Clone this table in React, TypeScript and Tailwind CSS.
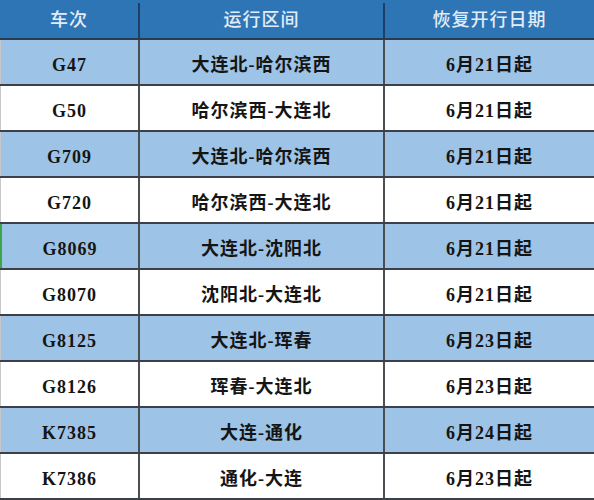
const rows = [
    { no: 'G47', route: '大连北-哈尔滨西', date: '6月21日起' },
    { no: 'G50', route: '哈尔滨西-大连北', date: '6月21日起' },
    { no: 'G709', route: '大连北-哈尔滨西', date: '6月21日起' },
    { no: 'G720', route: '哈尔滨西-大连北', date: '6月21日起' },
    { no: 'G8069', route: '大连北-沈阳北', date: '6月21日起' },
    { no: 'G8070', route: '沈阳北-大连北', date: '6月21日起' },
    { no: 'G8125', route: '大连北-珲春', date: '6月23日起' },
    { no: 'G8126', route: '珲春-大连北', date: '6月23日起' },
    { no: 'K7385', route: '大连-通化', date: '6月24日起' },
    { no: 'K7386', route: '通化-大连', date: '6月23日起' },
];

export default function App() {
    return (
        <div
            className="w-[594px] h-[500px] overflow-hidden bg-white"
            style={{ fontFamily: '"Liberation Serif", "Noto Sans CJK SC", serif' }}
        >
            {/* Header */}
            <div className="flex h-[40px] pt-[3px] bg-[#2e75b6] border-b-2 border-[#2a3b50] text-[18px] tracking-[1px] text-[#e3ecf6] font-medium">
                <div className="w-[140px] flex items-center justify-center border-r-2 border-[#1f3f66]">车次</div>
                <div className="w-[245px] flex items-center justify-center border-r-2 border-[#1f3f66]">运行区间</div>
                <div className="flex-1 flex items-center justify-center">恢复开行日期</div>
            </div>

            {/* Rows */}
            {rows.map((row, i) => (
                <div
                    key={row.no}
                    className={`flex h-[46px] border-b-2 border-[#3c4149] text-[18px] tracking-[1px] font-bold text-[#151515] ${
                        i % 2 === 0 ? 'bg-[#9dc3e6]' : 'bg-white'
                    }`}
                >
                    <div
                        className={`w-[140px] pt-[6px] flex items-center justify-center border-r-2 border-[#4a4d52] ${
                            row.no === 'G8069' ? 'border-l-2 border-l-[#3aa64a]' : 'border-l border-l-[#c8c8c8]'
                        }`}
                    >
                        {row.no}
                    </div>
                    <div className="w-[245px] pt-[6px] flex items-center justify-center border-r-2 border-[#4a4d52]">
                        {row.route}
                    </div>
                    <div className="flex-1 pt-[6px] flex items-center justify-center">{row.date}</div>
                </div>
            ))}
        </div>
    );
}
